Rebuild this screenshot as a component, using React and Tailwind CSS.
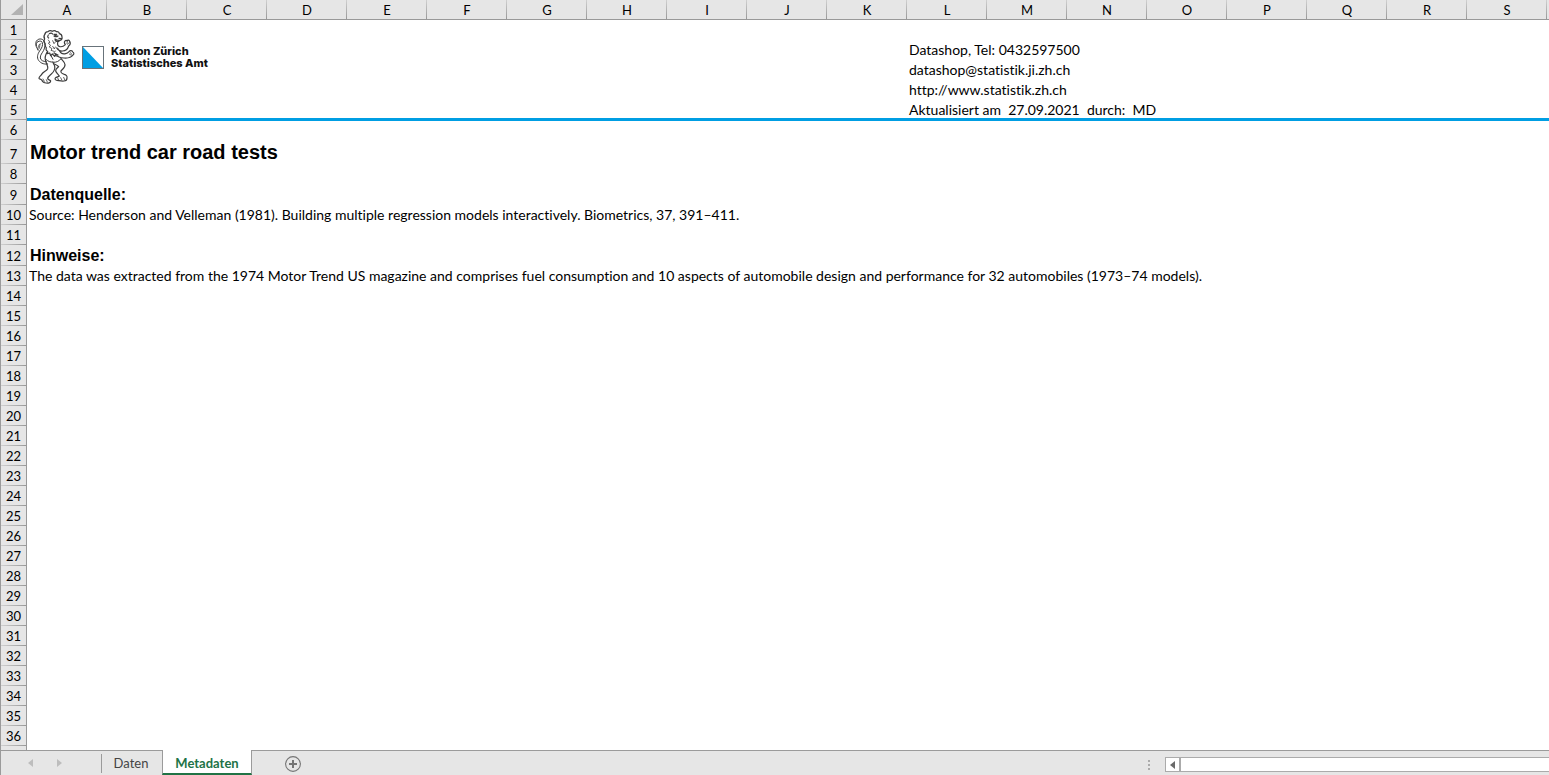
import React from "react";

const COLUMNS = "ABCDEFGHIJKLMNOPQRS".split("");
const ROWS = Array.from({ length: 36 }, (_, i) => i + 1);

const CELLS = {
  L2: { text: "Datashop, Tel: 0432597500" },
  L3: { text: "datashop@statistik.ji.zh.ch" },
  L4: { text: "http://www.statistik.zh.ch" },
  L5: { text: "Aktualisiert am  27.09.2021  durch:  MD" },
  A7: { text: "Motor trend car road tests", kind: "title" },
  A9: { text: "Datenquelle:", kind: "heading" },
  A10: {
    text: "Source: Henderson and Velleman (1981). Building multiple regression models interactively. Biometrics, 37, 391–411.",
  },
  A12: { text: "Hinweise:", kind: "heading" },
  A13: {
    text: "The data was extracted from the 1974 Motor Trend US magazine and comprises fuel consumption and 10 aspects of automobile design and performance for 32 automobiles (1973–74 models).",
  },
};

const KINDS = {
  title: "pl-[3px] font-['Liberation_Sans',Arial,sans-serif] text-[20px] leading-6 font-bold",
  heading: "pl-[3px] font-['Liberation_Sans',Arial,sans-serif] text-[16px] leading-5 font-bold",
  body: "pl-[2px] text-[14px] leading-5",
};

const ROW_HEAD =
  "border-r border-[#999] bg-[#e6e6e6] bg-linear-to-r from-[#d0d0d0] to-[#999] bg-[length:100%_1px] bg-bottom bg-no-repeat p-0 align-bottom text-[13px] leading-5 font-normal";

function rowHeight(n) {
  if (n === 7) return "h-6";
  if (n === 9 || n === 12) return "h-[21px]";
  return "h-5";
}

function Lion() {
  return (
    <svg
      viewBox="0 0 120 165"
      className="h-[55px] w-10 shrink-0"
      fill="none"
      stroke="#3c3c3c"
      strokeWidth="3.6"
      strokeLinecap="round"
      strokeLinejoin="round"
      role="img"
      aria-label="Zürcher Löwe"
    >
      <path d="M30 15c1-5 5-7 9-7 4-4 9-4 13-1 5-3 9-2 12 1 5-1 9 1 9 6 4 1 8 5 8 10 1 5-1 9-6 10-6 1-11-1-15-4 0 7 5 9 12 7" />
      <path d="M30 15c-4 5-4 10-1 15-3 4-3 9 1 13 0 6 0 10 4 14-2 4 0 8 4 10l-1 7 7-2 3 8 5-5 7 7 3-7 7 3" />
      <path d="M43 14c4-3 8-2 10 1M57 16h8M57 21c4 3 8 3 12 0M60 19l6 2M40 18c-3 4-2 7 1 9M72 28l8 1" />
      <path d="M40 33l5 7-5 2 7 8-5 3 9 6-3 5 9 3M53 35l4 9 4-5M53 52l5 8 3-6" strokeWidth="2.4" />
      <path d="M68 41c-1 6 2 11 7 12 6 1 12-2 16-6-3-4-4-8-1-11 2-3 5-3 6 0 2-4 7-3 8 1 3 5 2 10-3 14-3 9-9 15-18 15-7 1-14-3-18-9" />
      <path d="M97 37l-1 7M102 41l-4 5" strokeWidth="2.2" />
      <path d="M74 66c4 8 11 10 18 8 4-1 7-3 10-6 3-4 10-4 11 1 5 1 4 7 1 9-5 7-15 10-27 9-10 0-20-4-25-12" />
      <path d="M107 71l3 5M103 75l6 4M61 66l-5 7 8 2-3 6 8 1M68 57l6 9" strokeWidth="2.4" />
      <path d="M36 70c-5 8-7 17-4 26 3 10 8 16 6 23-3 7-14 10-18 17-3 5-8 7-8 12 1 3 6 2 8 5 3 6 7 9 13 9 6 1 14 0 14-6-1-4-8-3-9-7 0-6 5-9 11-14 8-7 12-15 10-24-2-5-4-8-5-11" />
      <path d="M78 89c4 5 11 10 12 18 1 8-7 13-12 19-2 6 4 8 10 10 5 1 9 6 8 11 0 5-4 9-9 9-7 1-14-1-21-2-5 0-7-4-5-7 3-4 9-3 12-6-3-5-9-9-11-15-1-6 5-9 9-13-3-4-8-6-13-8" />
      <path d="M56 100c8 0 17-3 22-11M47 78l7 13M34 92c5 5 12 8 20 7" strokeWidth="3" />
      <path d="M24 150l4 7M34 152l3 7M68 147l3 6M77 146l3 6M86 145l3 7" strokeWidth="2.4" />
      <path d="M38 105c-13 2-24-4-29-14-4-10 1-20 7-28 5-7 8-15 6-22-1-5-8-6-13-3-5 2-6 8-5 13M34 98c-9 0-17-4-18-11-1-9 6-15 10-23 4-9 6-19 1-28-4-7-14-8-20-3-6 4-5 14-3 20l5 10" strokeWidth="3" />
      <path d="M9 63c-1-6 1-13 5-18M14 58c-1-5 0-10 3-14" strokeWidth="2.4" />
    </svg>
  );
}

function Logo() {
  return (
    <div className="pointer-events-none absolute top-[29px] left-[34px] flex items-start">
      <Lion />
      <svg viewBox="0 0 22 23" className="mt-[17px] ml-[7px] h-[23px] w-[22px] shrink-0" aria-hidden="true">
        <rect x="0.5" y="0.5" width="21" height="22" fill="#fff" stroke="#68737a" />
        <path d="M1 1L21 22H1Z" fill="#009ee3" />
      </svg>
      <p className="mt-4 ml-[7px] font-[Inter,'Liberation_Sans',sans-serif] text-[11px] leading-3 font-extrabold whitespace-nowrap text-[#111]">
        Kanton Zürich
        <br />
        Statistisches Amt
      </p>
    </div>
  );
}

function Sheet() {
  return (
    <div className="relative min-h-0 flex-1 overflow-hidden border-l border-[#9b9b9b]">
      <table className="w-full table-fixed border-separate border-spacing-0">
        <colgroup>
          <col className="w-[26px]" />
          {COLUMNS.map((c) => (
            <col key={c} className="w-20" />
          ))}
          <col />
        </colgroup>
        <thead>
          <tr className="h-5 bg-[#e6e6e6]">
            <th className="border-r border-b border-[#999] p-0" aria-label="Alles auswählen">
              <svg viewBox="0 0 12 11" className="ml-[10px] h-[11px] w-3" aria-hidden="true">
                <path d="M12 0V11H0Z" fill="#b2b2b2" />
              </svg>
            </th>
            {COLUMNS.map((c) => (
              <th
                key={c}
                scope="col"
                className="border-b border-[#999] bg-linear-to-b from-[#d0d0d0] to-[#999] bg-[length:1px_100%] bg-right bg-no-repeat px-0 pt-[2px] pb-0 text-[13px] leading-[17px] font-normal"
              >
                {c}
              </th>
            ))}
            <td className="border-b border-[#999] p-0" />
          </tr>
        </thead>
        <tbody>
          {ROWS.map((n) => (
            <tr key={n} className={rowHeight(n)}>
              <th scope="row" className={ROW_HEAD}>
                {n}
              </th>
              {[...COLUMNS, ""].map((c) => {
                const cell = CELLS[c + n];
                return (
                  <td
                    key={c}
                    className={
                      "p-0 align-bottom whitespace-pre " +
                      (n === 5
                        ? "bg-linear-to-r from-[#009ee3] to-[#009ee3] bg-[length:100%_2px] bg-bottom bg-no-repeat"
                        : n === 6
                          ? "border-t border-[#009ee3]"
                          : "")
                    }
                  >
                    {cell && <div className={KINDS[cell.kind || "body"]}>{cell.text}</div>}
                  </td>
                );
              })}
            </tr>
          ))}
          <tr className="h-5">
            <td className={ROW_HEAD} />
          </tr>
        </tbody>
      </table>
      <Logo />
    </div>
  );
}

function Arrow({ left }) {
  return (
    <svg viewBox="0 0 5 8" className="h-2 w-[5px]" fill="currentColor" aria-hidden="true">
      <path d={left ? "M5 0V8L0 4Z" : "M0 0V8L5 4Z"} />
    </svg>
  );
}

function TabBar() {
  return (
    <footer className="flex h-[25px] shrink-0 bg-[#e6e6e6] text-[13px]">
      <div className="flex w-[101px] items-center gap-6 border-t border-l border-[#9b9b9b] pl-[27px] text-[#bdbdbd]">
        <button type="button" aria-label="Vorheriges Blatt">
          <Arrow left />
        </button>
        <button type="button" aria-label="Nächstes Blatt">
          <Arrow />
        </button>
      </div>
      <div className="flex border-t border-[#9b9b9b] pt-[3px] pb-[2px]">
        <button type="button" className="w-[61px] border-l border-[#9b9b9b] pr-[2px] pb-px leading-[18px] text-[#444]">
          Daten
        </button>
      </div>
      <button
        type="button"
        aria-current="page"
        className="w-[90px] border-x border-b-2 border-x-[#9b9b9b] border-b-[#217346] bg-white pt-[2px] leading-5 font-bold text-[#217346]"
      >
        Metadaten
      </button>
      <div className="flex flex-1 items-center border-t border-[#9b9b9b]">
        <button type="button" aria-label="Neues Blatt" className="ml-[33px] pt-[2px]">
          <svg viewBox="0 0 16 16" className="size-4" fill="none" stroke="#757575" aria-hidden="true">
            <circle cx="8" cy="8" r="7.4" strokeWidth="1.1" />
            <path d="M8 4V12M4 8H12" strokeWidth="2" />
          </svg>
        </button>
      </div>
      <div className="flex w-[401px] items-center border-t border-[#9b9b9b] pt-[3px]">
        <svg viewBox="0 0 2 10" className="h-[10px] w-[2px]" fill="#ababab" aria-hidden="true">
          <path d="M0 0H2V2H0ZM0 4H2V6H0ZM0 8H2V10H0Z" />
        </svg>
        <div className="ml-[15px] flex h-[15px] flex-1 border-y border-l border-[#ababab] bg-white">
          <button
            type="button"
            aria-label="Nach links scrollen"
            className="flex w-[15px] items-center justify-center border-r-2 border-[#ababab] text-[#6a6a6a]"
          >
            <Arrow left />
          </button>
        </div>
      </div>
    </footer>
  );
}

export default function App() {
  return (
    <main className="flex h-screen flex-col overflow-hidden bg-white font-[Lato,'Open_Sans',sans-serif] text-black [font-variant-ligatures:none]">
      <Sheet />
      <TabBar />
    </main>
  );
}
